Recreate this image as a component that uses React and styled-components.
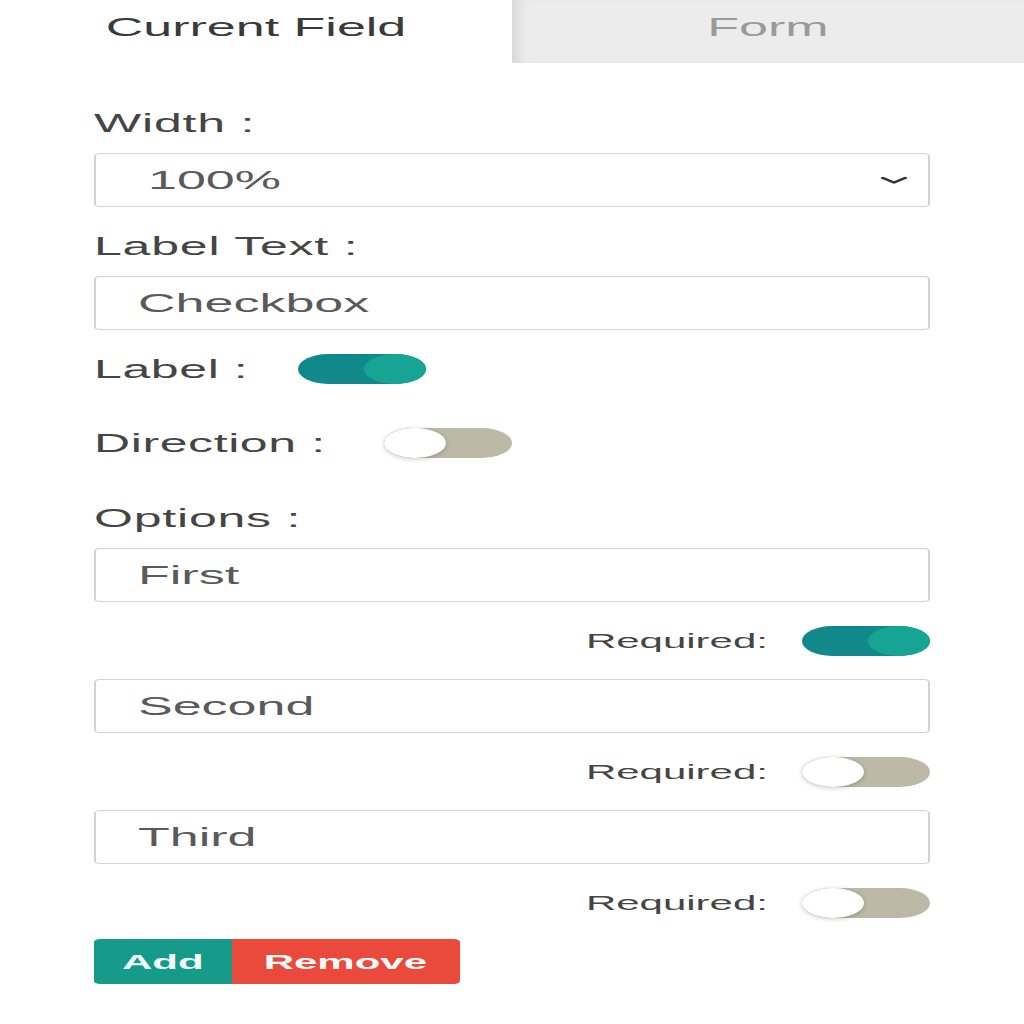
import React from 'react';
import styled, { createGlobalStyle } from 'styled-components';

const GlobalStyle = createGlobalStyle`
  html, body {
    margin: 0;
    padding: 0;
    background: #ffffff;
  }
  body {
    font-family: "Liberation Sans", Arial, sans-serif;
    overflow: hidden;
  }
`

// the screenshot is a narrow panel stretched to twice its width
const Stage = styled.div`
  width: 512px;
  transform: scaleX(2);
  transform-origin: 0 0;
`

const Tabs = styled.div`
  display: grid;
  grid-template-columns: 1fr 1fr;
  height: 63px;
`

const Tab = styled.div`
  display: flex;
  justify-content: center;
  padding-top: 12px;
  box-sizing: border-box;
  font-size: 26px;
  color: ${p => (p.$active ? '#3a3a3a' : '#9a9a9a')};
  background: ${p => (p.$active ? '#ffffff' : '#ececec')};
  box-shadow: ${p => (p.$active ? 'none' : 'inset 9px 0 8px -6px rgba(0, 0, 0, 0.09)')};
`

const Panel = styled.div`
  display: flex;
  flex-direction: column;
  padding: 45px 47px 0;
`

const FieldLabel = styled.div`
  font-size: 25px;
  line-height: 30px;
  height: 30px;
  color: #454545;
  letter-spacing: 0.4px;
  margin-top: ${p => p.$top || 0}px;
  margin-bottom: 15px;
`

const Box = styled.div`
  height: 54px;
  box-sizing: border-box;
  border: 1px solid #d4d4d4;
  border-radius: 3px;
  display: flex;
  align-items: center;
  justify-content: space-between;
  padding: 0 ${p => (p.$select ? 10 : 20)}px 0 ${p => (p.$select ? 26 : 21)}px;
  font-size: 26px;
  color: #5a5a5a;
  margin-top: ${p => p.$top || 0}px;
`

const ToggleRow = styled.div`
  display: flex;
  align-items: center;
  gap: ${p => p.$gap || 25}px;
  justify-content: ${p => (p.$right ? 'flex-end' : 'flex-start')};
  margin-top: ${p => p.$top || 0}px;
  height: 30px;
`

const RowText = styled.span`
  font-size: ${p => p.$size || 25}px;
  color: #454545;
  letter-spacing: ${p => (p.$size ? 0 : 0.3)}px;
`

const Track = styled.div`
  width: 64px;
  height: 30px;
  border-radius: 15px;
  background: ${p => (p.$on ? '#11898a' : '#bdb9a7')};
  display: flex;
  justify-content: ${p => (p.$on ? 'flex-end' : 'flex-start')};
  flex-shrink: 0;
`

const Knob = styled.div`
  width: 31px;
  height: 30px;
  border-radius: 50%;
  background: ${p => (p.$on ? '#16a594' : '#ffffff')};
  box-shadow: ${p => (p.$on ? 'none' : '0 1px 4px rgba(0, 0, 0, 0.22)')};
`

const ButtonGroup = styled.div`
  display: flex;
  margin-top: 21px;
`

const Button = styled.button`
  height: 45px;
  padding: 0 ${p => (p.$danger ? 16 : 14)}px;
  border: none;
  font-family: "Liberation Sans", Arial, sans-serif;
  font-weight: bold;
  font-size: 21px;
  color: #f2fbf9;
  background: ${p => (p.$danger ? '#e94a3c' : '#169b8a')};
  border-radius: ${p => (p.$danger ? '0 3px 3px 0' : '3px 0 0 3px')};
`

const Toggle = ({ on }) => (
  <Track $on={on}>
    <Knob $on={on} />
  </Track>
)

const Chevron = () => (
  <svg width="14" height="9" viewBox="0 0 14 9">
    <path d="M1.5 2 L7 6.5 L12.5 2" fill="none" stroke="#333" strokeWidth="2.2" strokeLinecap="round" strokeLinejoin="round" />
  </svg>
)

const options = [
  { name: 'First', required: true },
  { name: 'Second', required: false },
  { name: 'Third', required: false },
]

export default function App() {
  return (
    <Stage>
      <GlobalStyle />
      <Tabs>
        <Tab $active>Current Field</Tab>
        <Tab>Form</Tab>
      </Tabs>
      <Panel>
        <FieldLabel>Width :</FieldLabel>
        <Box $select>
          <span>100%</span>
          <Chevron />
        </Box>
        <FieldLabel $top={24}>Label Text :</FieldLabel>
        <Box>Checkbox</Box>
        <ToggleRow $top={24}>
          <RowText>Label :</RowText>
          <Toggle on />
        </ToggleRow>
        <ToggleRow $top={44} $gap={29}>
          <RowText>Direction :</RowText>
          <Toggle />
        </ToggleRow>
        <FieldLabel $top={45}>Options :</FieldLabel>
        {options.map((o, i) => (
          <React.Fragment key={o.name}>
            <Box $top={i === 0 ? 0 : 23}>{o.name}</Box>
            <ToggleRow $right $gap={17} $top={24}>
              <RowText $size={21}>Required:</RowText>
              <Toggle on={o.required} />
            </ToggleRow>
          </React.Fragment>
        ))}
        <ButtonGroup>
          <Button>Add</Button>
          <Button $danger>Remove</Button>
        </ButtonGroup>
      </Panel>
    </Stage>
  );
}
